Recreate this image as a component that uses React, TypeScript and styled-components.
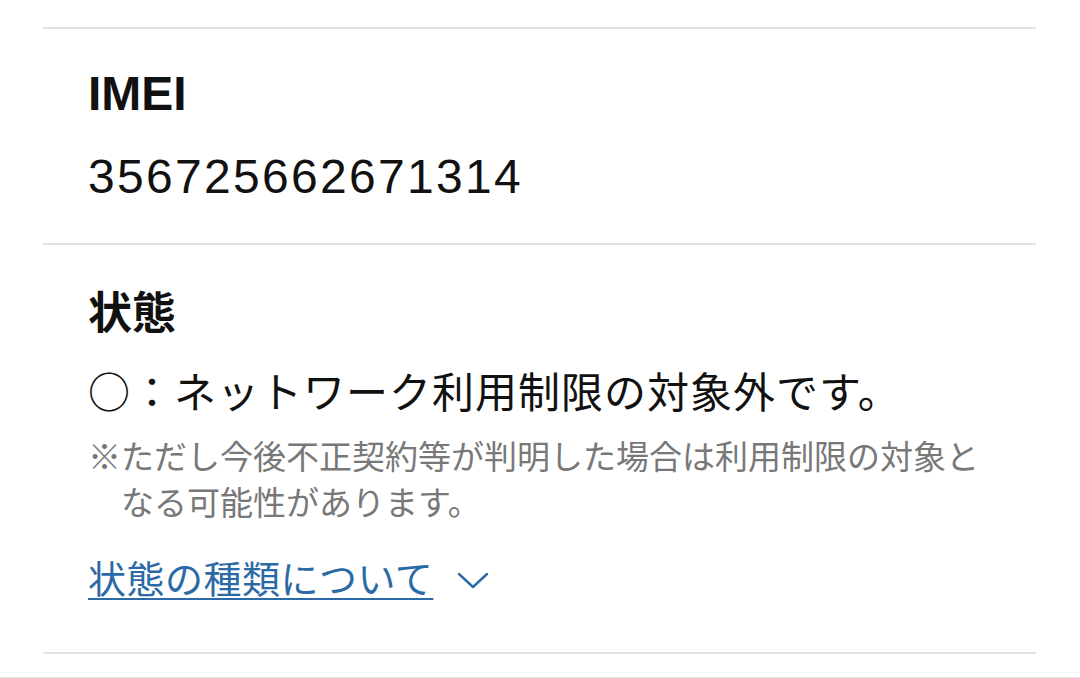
import React from "react";
import styled, { createGlobalStyle } from "styled-components";

const GlobalStyle = createGlobalStyle`
  html, body {
    margin: 0;
    padding: 0;
    background: #ffffff;
  }
  body {
    font-family: "Noto Sans CJK JP", "Liberation Sans", sans-serif;
    color: #151515;
    -webkit-font-smoothing: antialiased;
  }
`;

const Page = styled.div`
  width: 1080px;
  height: 678px;
  overflow: hidden;
  display: flex;
  flex-direction: column;
  padding-top: 27px;
  box-sizing: border-box;
`;

const List = styled.dl`
  margin: 0 0 0 43px;
  width: 993px;
  border-top: 2px solid #e2e2e2;
`;

const Item = styled.div<{ $bottom: number }>`
  padding: 35px 48px ${(p) => p.$bottom}px 45px;
  border-bottom: 2px solid #e2e2e2;
`;

const Label = styled.dt<{ $latin?: boolean }>`
  margin: 0;
  font-family: ${(p) =>
    p.$latin
      ? `"Liberation Sans", "Noto Sans CJK JP", sans-serif`
      : `"Noto Sans CJK JP", sans-serif`};
  font-size: ${(p) => (p.$latin ? 48 : 44)}px;
  font-weight: 700;
  line-height: 60px;
  color: #111111;
`;

const Value = styled.dd`
  margin: 0;
`;

const Number = styled.div`
  margin-top: 23px;
  font-family: "Liberation Sans", sans-serif;
  font-size: 48px;
  letter-spacing: 2.3px;
  line-height: 60px;
  color: #111111;
`;

const Status = styled.div`
  margin-top: 20px;
  font-family: "Noto Sans CJK JP", sans-serif;
  font-size: 42px;
  letter-spacing: 1px;
  line-height: 60px;
  color: #111111;
  white-space: nowrap;
`;

const Note = styled.p`
  margin: 12px 0 0;
  padding-left: 1em;
  text-indent: -1em;
  font-family: "Noto Sans CJK JP", sans-serif;
  font-size: 33px;
  line-height: 46px;
  color: #787878;
`;

const Toggle = styled.div`
  margin-top: 27px;
  display: flex;
  align-items: center;
  gap: 24px;
`;

const ToggleLink = styled.a`
  font-family: "Noto Sans CJK JP", sans-serif;
  font-size: 38px;
  letter-spacing: 0.5px;
  line-height: 52px;
  color: #2b6aa4;
  text-decoration: underline;
  text-decoration-thickness: 2px;
  text-underline-offset: 5px;
  cursor: pointer;
`;

const Chevron = styled.svg`
  width: 32px;
  height: 18px;
  margin-top: 6px;
  flex: none;
`;

const Footer = styled.div`
  flex: 1;
  border-bottom: 1px solid #f4f4f4;
  margin-bottom: 4px;
`;

const FooterLine = styled.div`
  height: 1px;
  background: #e6e6e6;
`;

export default function App() {
  return (
    <>
      <GlobalStyle />
      <Page>
        <List>
          <Item $bottom={36}>
            <Label $latin>IMEI</Label>
            <Value>
              <Number>356725662671314</Number>
            </Value>
          </Item>
          <Item $bottom={49}>
            <Label>状態</Label>
            <Value>
              <Status>○：ネットワーク利用制限の対象外です。</Status>
              <Note>
                ※ただし今後不正契約等が判明した場合は利用制限の対象となる可能性があります。
              </Note>
              <Toggle>
                <ToggleLink>状態の種類について</ToggleLink>
                <Chevron viewBox="0 0 32 18" fill="none">
                  <path
                    d="M2 3 L16 16 L30 3"
                    stroke="#2b6aa4"
                    strokeWidth="2.4"
                    strokeLinecap="round"
                    strokeLinejoin="round"
                  />
                </Chevron>
              </Toggle>
            </Value>
          </Item>
        </List>
        <Footer />
        <FooterLine />
      </Page>
    </>
  );
}
